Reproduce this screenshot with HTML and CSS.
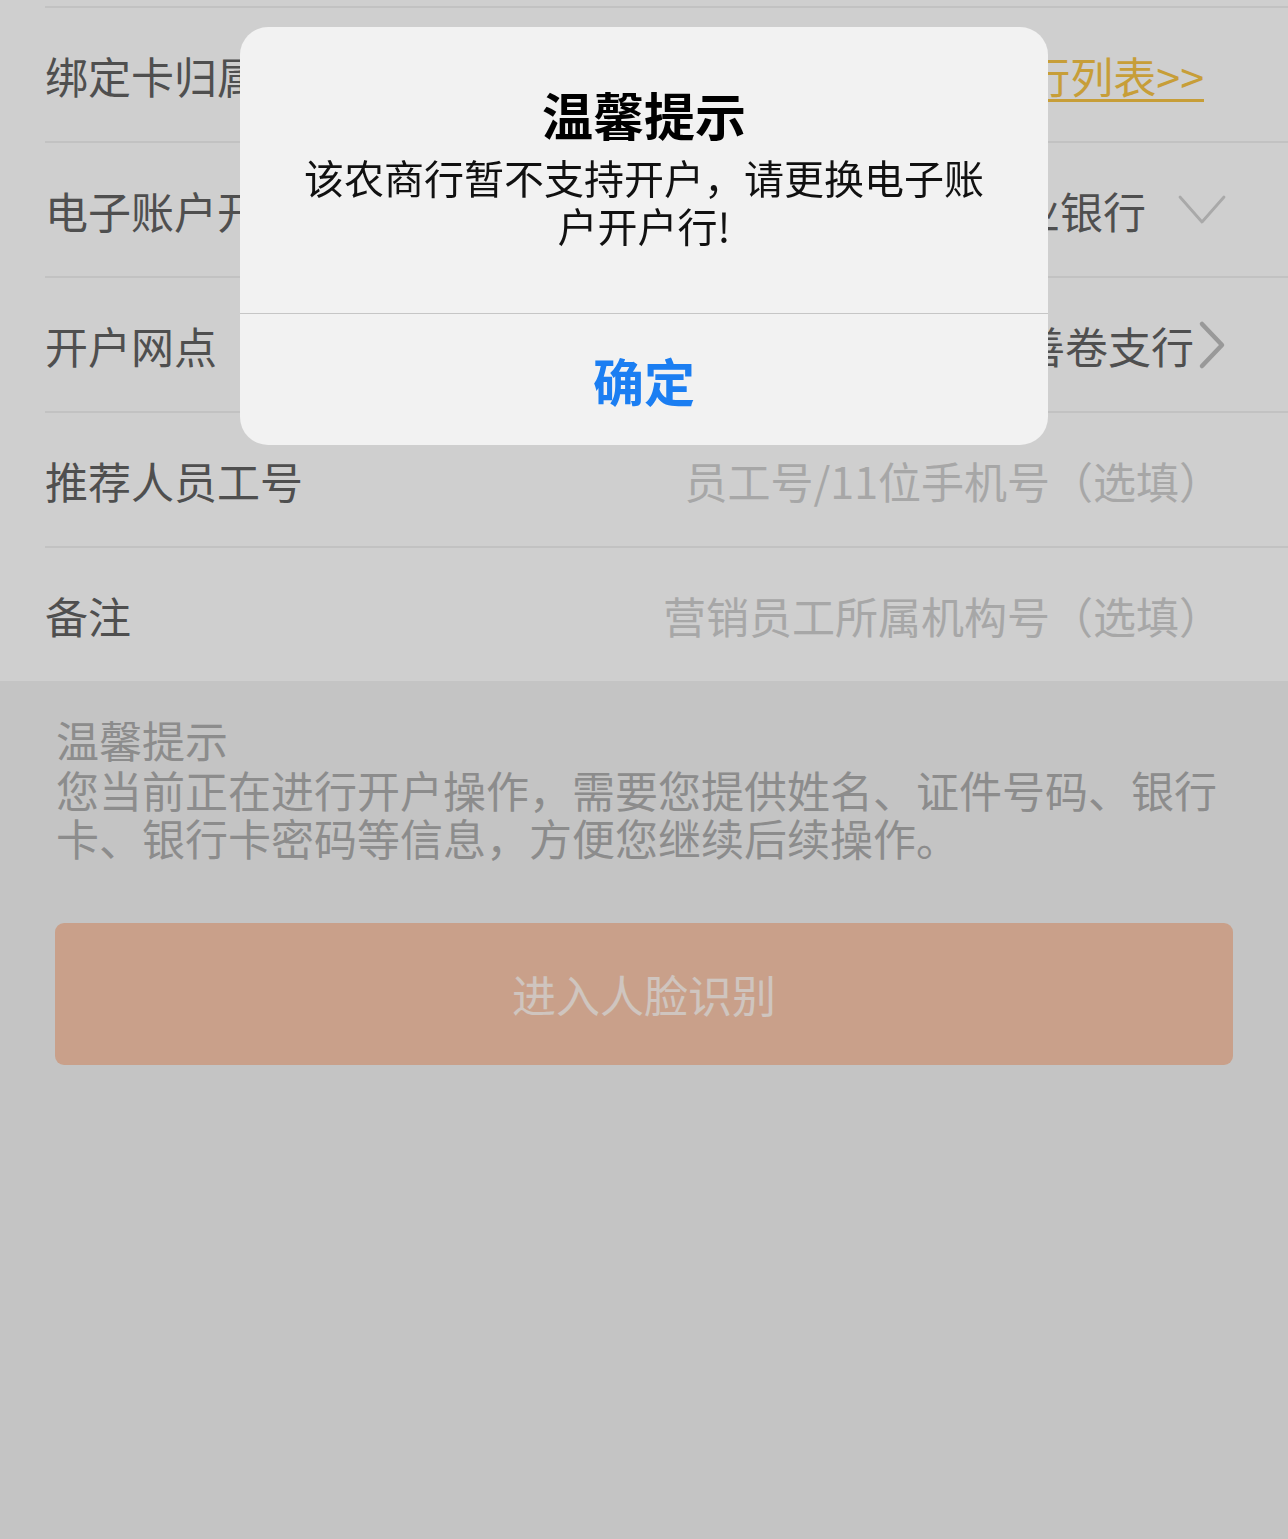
FILE: index.html
```html
<!DOCTYPE html>
<html lang="zh-CN">
<head>
<meta charset="utf-8">
<title>开户</title>
<link rel="stylesheet" href="styles.css">
</head>
<body>
<div class="page">
  <div class="form">
    <div class="row">
      <span class="label">绑定卡归属行</span>
      <span class="link">查看支持银行列表&gt;&gt;</span>
    </div>
    <div class="row">
      <span class="label">电子账户开户行</span>
      <span class="value">农村商业银行</span>
      <svg class="chev-down" width="48" height="30" viewBox="0 0 48 30"><polyline points="2,2 24,27 46,2" fill="none" stroke="#d0d0d0" stroke-width="2.8" stroke-linecap="round" stroke-linejoin="round"/></svg>
    </div>
    <div class="row">
      <span class="label">开户网点</span>
      <span class="value tight">宜兴善卷支行</span>
      <svg class="chev-right" width="28" height="50" viewBox="0 0 28 50"><polyline points="4,4 24,25 4,46" fill="none" stroke="#bdbdbd" stroke-width="4.5" stroke-linecap="round" stroke-linejoin="round"/></svg>
    </div>
    <div class="row">
      <span class="label">推荐人员工号</span>
      <span class="placeholder">员工号/11位手机号（选填）</span>
    </div>
    <div class="row">
      <span class="label">备注</span>
      <span class="placeholder">营销员工所属机构号（选填）</span>
    </div>
  </div>
  <div class="tips">
    <div class="tips-title">温馨提示</div>
    <div class="tips-text">您当前正在进行开户操作，需要您提供姓名、证件号码、银行卡、银行卡密码等信息，方便您继续后续操作。</div>
  </div>
  <div class="btn-wrap">
    <div class="btn">进入人脸识别</div>
  </div>
</div>
<div class="mask"></div>
<div class="alert">
  <div class="alert-body">
    <div class="alert-title">温馨提示</div>
    <div class="alert-msg">该农商行暂不支持开户，请更换电子账户开户行!</div>
  </div>
  <div class="alert-btn">确定</div>
</div>
</body>
</html>
```
FILE: styles.css
```css
html, body {
  margin: 0;
  padding: 0;
}
body {
  background: #f2f2f2;
  font-family: "Noto Sans CJK SC", "Noto Sans", sans-serif;
  min-height: 1539px;
}
.page {
  min-height: 1539px;
}
.form {
  background: #ffffff;
  padding-top: 6px;
}
.row {
  display: flex;
  align-items: center;
  height: 133px;
  margin-left: 45px;
  padding-right: 62px;
  border-top: 2px solid #efefef;
  font-size: 43px;
}
.label {
  color: #626262;
  flex: 1;
  white-space: nowrap;
}
.value {
  color: #626262;
  white-space: nowrap;
  margin-right: 32px;
}
.value.tight {
  margin-right: 4px;
}
.link {
  color: #f6c345;
  text-decoration: underline;
  text-decoration-thickness: 3px;
  text-underline-offset: 5px;
  margin-right: 22px;
  white-space: nowrap;
}
.placeholder {
  color: #cecece;
  white-space: nowrap;
  margin-right: 4px;
}
.chev-down, .chev-right {
  display: block;
  flex: none;
}
.tips {
  padding: 32px 52px 0 56px;
  font-size: 43px;
  color: #adadad;
}
.tips-title {
  line-height: 52px;
}
.tips-text {
  line-height: 48px;
}
.btn-wrap {
  padding: 62px 55px 0 55px;
}
.btn {
  height: 142px;
  border-radius: 9px;
  background: #f8c6aa;
  color: #fff3ec;
  font-size: 44px;
  display: flex;
  align-items: center;
  justify-content: center;
}
.mask {
  position: fixed;
  inset: 0;
  background: rgba(0, 0, 0, 0.19);
}
.alert {
  position: fixed;
  top: 27px;
  left: 240px;
  width: 808px;
  background: #f2f2f2;
  border-radius: 28px;
  overflow: hidden;
  text-align: center;
}
.alert-body {
  padding: 57px 60px 64px;
  border-bottom: 1px solid #c6c6c6;
}
.alert-title {
  font-size: 51px;
  line-height: 60px;
  font-weight: 700;
  color: #000;
  margin-bottom: 9px;
}
.alert-msg {
  font-size: 40px;
  line-height: 48px;
  color: #111;
}
.alert-btn {
  height: 131px;
  display: flex;
  align-items: center;
  justify-content: center;
  font-size: 51px;
  font-weight: 700;
  color: #1b7ef2;
}
```
